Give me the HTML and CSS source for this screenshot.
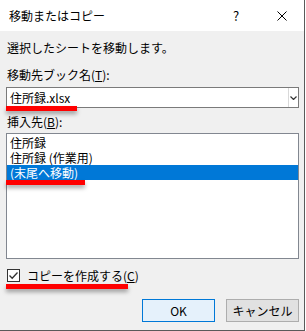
FILE: index.html
```html
<!DOCTYPE html>
<html lang="ja">
<head>
  <meta charset="UTF-8">
  <meta name="viewport" content="width=device-width, initial-scale=1.0">
  <title>移動またはコピー</title>
  <link rel="stylesheet" href="styles.css">
</head>
<body>
  <div class="dialog">
    <div class="titlebar">
      <span class="title">移動またはコピー</span>
      <span class="help">?</span>
      <span class="close">
        <svg width="10" height="10" viewBox="0 0 10 10"><path d="M0.5 0.5 L9.5 9.5 M9.5 0.5 L0.5 9.5" stroke="#000" stroke-width="1"/></svg>
      </span>
    </div>

    <div class="content">
      <p class="desc">選択したシートを移動します。</p>

      <label class="label">移動先ブック名(<u>T</u>):</label>
      <div class="combo">
        <span class="combo-value">住所録.xlsx</span>
        <span class="combo-btn">
          <svg width="7" height="4" viewBox="0 0 7 4"><path d="M0.5 0.5 L3.5 3.5 L6.5 0.5" fill="none" stroke="#333" stroke-width="1.2"/></svg>
        </span>
      </div>

      <label class="label label-list">挿入先(<u>B</u>):</label>
      <ul class="listbox">
        <li>住所録</li>
        <li>住所録 (作業用)</li>
        <li class="selected">(末尾へ移動)</li>
      </ul>

      <div class="check-row">
        <span class="checkbox">
          <svg width="11" height="11" viewBox="0 0 11 11"><path d="M1.5 5.5 L4.2 8.3 L9.5 2.5" fill="none" stroke="#333" stroke-width="1.3"/></svg>
        </span>
        <span>コピーを作成する(<u>C</u>)</span>
      </div>

      <div class="buttons">
        <button class="btn btn-default">OK</button>
        <button class="btn">キャンセル</button>
      </div>
    </div>

    <!-- red highlight marks -->
    <div class="mark mark-book"></div>
    <div class="mark mark-end"></div>
    <div class="mark mark-copy"></div>
  </div>
</body>
</html>
```

FILE: styles.css
```css
body {
  margin: 0;
  background: #fff;
  font-family: "Noto Sans CJK JP", "Noto Sans", sans-serif;
  font-size: 12px;
  line-height: 15px;
  color: #000;
}
.dialog {
  position: relative;
  width: 304px;
  height: 330px;
  background: #f0f0f0;
  border-right: 1px solid #5a5a5a;
  border-bottom: 1px solid #5a5a5a;
}
.titlebar {
  display: flex;
  align-items: center;
  height: 31px;
  background: #fff;
  padding-left: 9px;
}
.title {
  flex: 1;
}
.help {
  width: 12px;
  margin-right: 32px;
  font-size: 13px;
}
.close {
  display: flex;
  width: 27px;
}
.content {
  padding: 0 5px 0 6px;
}
.desc {
  margin: 9px 0 0 1px;
}
.label {
  display: block;
  margin: 12px 0 0 1px;
}
.label-list {
  margin-top: 6px;
}
.combo {
  display: flex;
  box-sizing: border-box;
  height: 21px;
  margin-top: 5px;
  background: #fff;
  border: 1px solid #7a7a7a;
}
.combo-value {
  flex: 1;
  padding: 2px 0 0 3px;
}
.combo-btn {
  display: flex;
  align-items: center;
  justify-content: center;
  width: 9px;
  border-left: 1px solid #d9d9d9;
}
.listbox {
  box-sizing: border-box;
  height: 126px;
  margin: 4px 0 0;
  padding: 1px 0 0;
  list-style: none;
  background: #fff;
  border: 1px solid #828790;
}
.listbox li {
  height: 15px;
  padding-left: 3px;
}
.listbox .selected {
  background: #0078d7;
  color: #fff;
}
.check-row {
  display: flex;
  align-items: center;
  gap: 7px;
  margin: 9px 0 0 1px;
}
.checkbox {
  display: flex;
  align-items: center;
  justify-content: center;
  box-sizing: border-box;
  width: 13px;
  height: 13px;
  background: #fff;
  border: 1px solid #333;
}
.buttons {
  display: flex;
  justify-content: flex-end;
  gap: 11px;
  margin-top: 16px;
}
.btn {
  box-sizing: border-box;
  width: 73px;
  height: 23px;
  padding: 0;
  font: inherit;
  color: #000;
  background: #e1e1e1;
  border: 1px solid #adadad;
}
.btn-default {
  background: #e5f1fb;
  border-color: #0078d7;
}
.mark {
  position: absolute;
  height: 5px;
  background: #ff0000;
  box-shadow: 0 3px 4px rgba(0, 0, 0, 0.35);
}
.mark-book {
  left: 6px;
  top: 106px;
  width: 71px;
}
.mark-end {
  left: 6px;
  top: 180px;
  width: 79px;
}
.mark-copy {
  left: 6px;
  top: 284px;
  width: 122px;
}
```
